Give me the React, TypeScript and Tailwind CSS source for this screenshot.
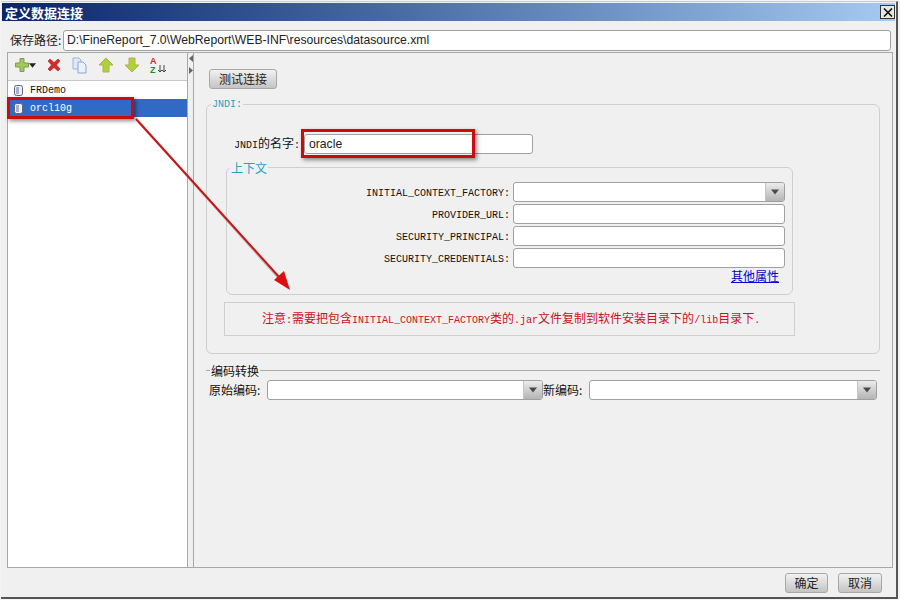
import React from "react";

const cjk = "font-['Noto_Sans_CJK_SC','Noto_Sans',sans-serif]";
const mono = "font-['Liberation_Mono','Noto_Sans_CJK_SC',monospace]";

const Caret = () => (
  <svg width="10" height="6" viewBox="0 0 10 6">
    <path d="M1 0.5h8L5 5.5z" fill="#4a4a4a" />
  </svg>
);

const Input = ({ className = "", children }: { className?: string; children?: React.ReactNode }) => (
  <div
    className={`h-5 bg-white border border-[#a0a0a0] rounded-[3px] flex items-center shrink-0 ${className}`}
  >
    {children}
  </div>
);

const Combo = ({ className = "" }: { className?: string }) => (
  <div className={`h-5 bg-white border border-[#a0a0a0] rounded-[3px] flex justify-end shrink-0 overflow-hidden ${className}`}>
    <div className="w-[19px] bg-gradient-to-b from-[#ececec] to-[#b4b4b4] border-l border-[#c4c4c4] flex items-center justify-center">
      <Caret />
    </div>
  </div>
);

const Button = ({ label, className = "" }: { label: string; className?: string }) => (
  <div
    className={`h-5 flex items-center justify-center rounded-[3px] border border-[#a8a8a8] bg-gradient-to-b from-[#f2f2f2] to-[#c4c4c4] text-xs text-[#222] ${className}`}
  >
    {label}
  </div>
);

const DbIcon = () => (
  <svg width="9" height="11" viewBox="0 0 9 11" className="shrink-0">
    <rect x="0.5" y="0.5" width="8" height="10" rx="2" fill="#eef0f8" stroke="#5a6478" />
    <rect x="2" y="2" width="3" height="7" fill="#a8b0d0" />
  </svg>
);

const ContextRow = ({ label, combo }: { label: string; combo?: boolean }) => (
  <div className="flex items-center h-5 mb-0.5">
    <span className={`w-[286px] text-right text-[10px] text-[#111] pr-[3px] pt-0.5 ${mono}`}>{label}:</span>
    {combo ? <Combo className="w-[272px]" /> : <Input className="w-[272px]" />}
  </div>
);

const Toolbar = () => (
  <div className="h-[27px] flex items-center pl-[7px] pb-[3px] gap-[10px]">
    <div className="flex items-center">
      <svg width="14" height="16" viewBox="0 0 14 14">
        <path d="M5 0.500h4v4.500h4.500v4H9v4.500H5V9H0.500V5H5z" fill="#a4c85c" stroke="#7f9c48" />
      </svg>
      <svg width="7" height="5" viewBox="0 0 8 5">
        <path d="M0 0h8L4 5z" fill="#222" />
      </svg>
    </div>
    <svg width="14" height="14" viewBox="0 0 14 14" className="mx-px">
      <path d="M1 3l2-2 4 3.500L11 1l2 2-3.500 4L13 11l-2 2-4-3.500L3 13l-2-2 3.500-4z" fill="#d42a2a" stroke="#b02020" strokeWidth="0.6" />
    </svg>
    <svg width="16" height="17" viewBox="0 0 16 17">
      <path d="M1 1h6l2 2v9H1z" fill="#dfe9f6" stroke="#9db4d4" />
      <path d="M6 5h5l3 3v8H6z" fill="#eaf1fa" stroke="#8aa6cc" />
    </svg>
    <svg width="16" height="16" viewBox="0 0 16 16">
      <path d="M8 1l7 7h-4v7H5V8H1z" fill="#a9d53c" stroke="#c2a84a" />
    </svg>
    <svg width="16" height="16" viewBox="0 0 16 16">
      <path d="M8 15L1 8h4V1h6v7h4z" fill="#a9d53c" stroke="#c2a84a" />
    </svg>
    <svg width="16" height="19" viewBox="0 0 16 19" className="-my-px">
      <text x="0" y="8" fontSize="9" fontWeight="700" fill="#d02828" fontFamily="Liberation Sans">A</text>
      <text x="0" y="17" fontSize="9" fontWeight="700" fill="#1c8a2e" fontFamily="Liberation Sans">Z</text>
      <path d="M10 9v7M8 14l2 2 2-2M14 9v7M12 14l2 2 2-2" stroke="#444" fill="none" />
    </svg>
  </div>
);

export default function App() {
  return (
    <div className={`relative w-[900px] h-[600px] bg-[#f4f4f4] overflow-hidden ${cjk}`}>
      <div className="h-[598px] w-[897px] ml-px mt-px flex flex-col bg-[#f0f0f0] border-r-2 border-b-2 border-[#555] border-t border-t-[#ccc]">
        {/* title bar */}
        <div className="h-[18px] mt-px mx-px bg-gradient-to-r from-[#0a246a] to-[#a6caf0] flex items-center justify-between pl-[3px] shrink-0">
          <span className="text-[13px] font-bold text-white leading-none">定义数据连接</span>
          <div className="w-[15px] h-[14px] bg-[#e8e8e0] border border-[#333] flex items-center justify-center">
            <svg width="10" height="9" viewBox="0 0 10 9">
              <path d="M1 0.500l8 8M9 0.500l-8 8" stroke="#111" strokeWidth="1.600" />
            </svg>
          </div>
        </div>

        {/* save path */}
        <div className="flex items-center h-[22px] mt-2 pl-[9px] shrink-0">
          <span className="w-[53px] text-xs text-[#222] whitespace-nowrap">保存路径:</span>
          <Input className="w-[828px] !h-[21px] pl-[3px]">
            <span className="text-[12.2px] font-['Liberation_Sans'] text-[#222]">
              D:\FineReport_7.0\WebReport\WEB-INF\resources\datasource.xml
            </span>
          </Input>
        </div>

        {/* main panel */}
        <div className="flex-1 min-h-0 ml-1.5 mr-[3px] mt-px flex border border-[#a8a8a8] bg-[#f0f0f0]">
          <div className="w-[180px] flex flex-col shrink-0 border-r border-[#a8a8a8]">
            <Toolbar />
            <div className="flex-1 bg-white border-t border-[#c8c8c8]">
              <div className={`h-[18px] flex items-center gap-[7px] pl-[6px] text-[10px] text-[#111] ${mono}`}>
                <DbIcon />
                FRDemo
              </div>
              <div className={`h-[18px] flex items-center gap-[7px] pl-[6px] text-[10px] text-white bg-[#316ac5] ${mono}`}>
                <DbIcon />
                orcl10g
              </div>
            </div>
          </div>

          <div className="w-[6px] shrink-0 border-r border-[#a8a8a8] flex flex-col items-center pt-0.5 gap-[5px]">
            <svg width="4" height="7" viewBox="0 0 4 7"><path d="M4 0v7L0 3.500z" fill="#666" /></svg>
            <svg width="4" height="7" viewBox="0 0 4 7"><path d="M0 0v7l4-3.500z" fill="#666" /></svg>
          </div>

          {/* right pane */}
          <div className="flex-1 min-w-0 pl-3 pr-3 pt-4">
            <Button label="测试连接" className="w-[68px] ml-[3px]" />

            <div className="relative mt-[15px] h-[250px] border border-[#cfcfcf] rounded-md">
              <span className={`absolute -top-[6px] left-1 px-px bg-[#f0f0f0] text-[10px] leading-3 text-[#2a9fc0] ${mono}`}>
                JNDI:
              </span>
              <div className="flex items-center pt-[29px]">
                <span className="w-[97px] text-right text-xs text-[#111] whitespace-nowrap pr-1">
                  <span className={`text-[10px] ${mono}`}>JNDI</span>的名字<span className={`text-[10px] ${mono}`}>:</span>
                </span>
                <Input className="w-[229px] pl-1">
                  <span className="text-[12.2px] font-['Liberation_Sans'] text-[#222]">oracle</span>
                </Input>
              </div>

              <div className="relative ml-[19px] mt-[13px] w-[567px] h-[128px] border border-[#cfcfcf] rounded-md pt-[14px]">
                <span className="absolute -top-[7px] left-[3px] px-px bg-[#f0f0f0] text-xs leading-[14px] text-[#2a9fc0]">
                  上下文
                </span>
                <ContextRow label="INITIAL_CONTEXT_FACTORY" combo />
                <ContextRow label="PROVIDER_URL" />
                <ContextRow label="SECURITY_PRINCIPAL" />
                <ContextRow label="SECURITY_CREDENTIALS" />
                <div className="flex justify-end pr-[13px] -mt-[2px]">
                  <span className="text-xs leading-4 text-[#0000cc] underline">其他属性</span>
                </div>
              </div>

              <div className="ml-[17px] mt-[7px] w-[571px] h-[34px] border border-[#cfcfcf] flex items-center pl-[37px] text-[#cc1122]">
                <span className="text-xs whitespace-nowrap">
                  注意<span className={`text-[10px] ${mono}`}>:</span>需要把包含
                  <span className={`text-[10px] ${mono}`}>INITIAL_CONTEXT_FACTORY</span>类的
                  <span className={`text-[10px] ${mono}`}>.jar</span>文件复制到软件安装目录下的
                  <span className={`text-[10px] ${mono}`}>/lib</span>目录下
                  <span className={`text-[10px] ${mono}`}>.</span>
                </span>
              </div>
            </div>

            <div className="flex items-center mt-[9px] h-[15px]">
              <div className="w-[4px] h-px bg-[#aaa]" />
              <span className="text-xs text-[#111] px-px">编码转换</span>
              <div className="flex-1 h-px bg-[#aaa]" />
            </div>
            <div className="flex items-center mt-[2px] pl-[3px] h-5">
              <span className="w-[58px] text-xs text-[#111] whitespace-nowrap">原始编码:</span>
              <Combo className="w-[276px]" />
              <span className="w-[46px] text-xs text-[#111] whitespace-nowrap">新编码:</span>
              <Combo className="w-[288px]" />
            </div>
          </div>
        </div>

        {/* footer */}
        <div className="h-[29px] shrink-0 flex items-center justify-end gap-[10px] pr-[14px]">
          <Button label="确定" className="w-[43px]" />
          <Button label="取消" className="w-[44px]" />
        </div>
      </div>

      {/* screenshot annotations */}
      <div className="absolute left-[7px] top-[97px] w-[127px] h-[22px] border-[3px] border-[#cc0c0c] shadow-[2px_2px_4px_rgba(0,0,0,0.45)]" />
      <div className="absolute left-[301px] top-[129px] w-[174px] h-[29px] border-[3px] border-[#cc0c0c] shadow-[2px_2px_4px_rgba(0,0,0,0.45)]" />
      <svg className="absolute left-0 top-0 pointer-events-none" width="900" height="600" viewBox="0 0 900 600">
        <path d="M137 120L282 282" stroke="#666" strokeWidth="2.500" opacity="0.35" transform="translate(2 2)" />
        <path d="M136 119L280 278" stroke="#cc1414" strokeWidth="2" />
        <path d="M290 290L284 271L274 280z" fill="#d81010" />
      </svg>
    </div>
  );
}
